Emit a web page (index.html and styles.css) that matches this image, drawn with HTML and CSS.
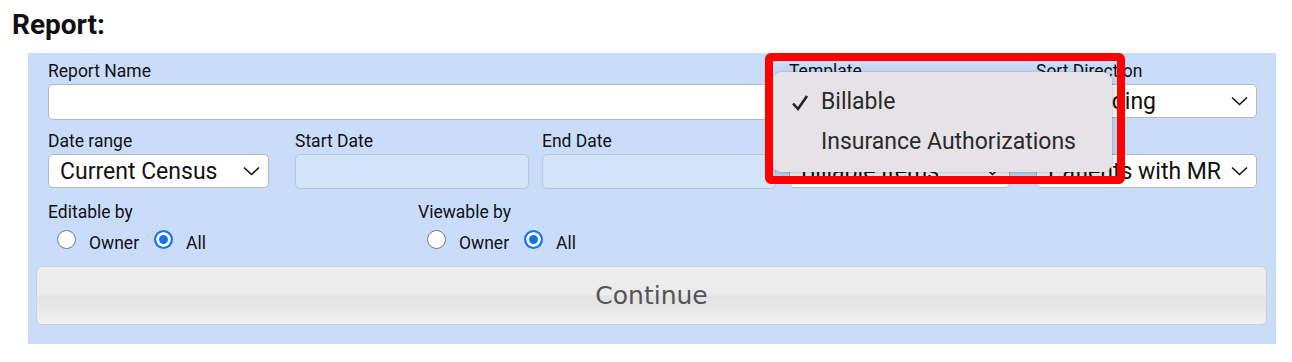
FILE: index.html
```html
<!DOCTYPE html>
<html lang="en">
<head>
    <meta charset="UTF-8">
    <title>Report</title>
    <link rel="stylesheet" href="styles.css">
</head>
<body>
    <div class="page">
        <h1 class="title">Report:</h1>

        <section class="panel">
            <div class="fields">
                <div class="field span-3">
                    <label>Report Name</label>
                    <div class="text-input"></div>
                </div>
                <div class="field">
                    <label>Template</label>
                    <div class="select"><span>Billable</span><svg class="chev" width="17" height="10" viewBox="0 0 17 10"><path d="M1 1.5 L8.5 8.5 L16 1.5" /></svg></div>
                </div>
                <div class="field">
                    <label>Sort Direction</label>
                    <div class="select"><span>Ascending</span><svg class="chev" width="17" height="10" viewBox="0 0 17 10"><path d="M1 1.5 L8.5 8.5 L16 1.5" /></svg></div>
                </div>

                <div class="field">
                    <label>Date range</label>
                    <div class="select"><span>Current Census</span><svg class="chev" width="17" height="10" viewBox="0 0 17 10"><path d="M1 1.5 L8.5 8.5 L16 1.5" /></svg></div>
                </div>
                <div class="field">
                    <label>Start Date</label>
                    <div class="text-input disabled"></div>
                </div>
                <div class="field">
                    <label>End Date</label>
                    <div class="text-input disabled"></div>
                </div>
                <div class="field">
                    <label>Items</label>
                    <div class="select"><span>Billable Items</span><svg class="chev" width="17" height="10" viewBox="0 0 17 10"><path d="M1 1.5 L8.5 8.5 L16 1.5" /></svg></div>
                </div>
                <div class="field">
                    <label>Filter</label>
                    <div class="select"><span>Patients with MR</span><svg class="chev" width="17" height="10" viewBox="0 0 17 10"><path d="M1 1.5 L8.5 8.5 L16 1.5" /></svg></div>
                </div>
            </div>

            <div class="perms">
                <div class="perm-group">
                    <label>Editable by</label>
                    <div class="radios">
                        <span class="radio"></span><span class="radio-text">Owner</span>
                        <span class="radio checked"></span><span class="radio-text">All</span>
                    </div>
                </div>
                <div class="perm-group">
                    <label>Viewable by</label>
                    <div class="radios">
                        <span class="radio"></span><span class="radio-text">Owner</span>
                        <span class="radio checked"></span><span class="radio-text">All</span>
                    </div>
                </div>
            </div>

            <button type="button" class="btn-continue">Continue</button>
        </section>

        <!-- menu aberto do select Template -->
        <div class="menu">
            <div class="menu-item">
                <svg class="check" width="18" height="18" viewBox="0 0 18 18"><path d="M2 9.5 L7 15 L16 2" /></svg>
                Billable
            </div>
            <div class="menu-item">Insurance Authorizations</div>
        </div>
        <div class="highlight"></div>
    </div>
</body>
</html>
```

FILE: styles.css
```css
* {
    margin: 0;
    padding: 0;
    box-sizing: border-box;
}

body {
    font-family: 'Roboto', 'Liberation Sans', sans-serif;
    background-color: #fff;
    color: #111;
}

.page {
    position: relative;
    width: 1292px;
    height: 362px;
}

.title {
    font-size: 28px;
    font-weight: bold;
    line-height: 32px;
    padding: 9px 12px 12px;
}

.panel {
    margin-left: 28px;
    width: 1248px;
    background-color: #c9ddfb;
    padding: 8px 8px 19px;
}

.fields {
    display: grid;
    grid-template-columns: repeat(5, 234px);
    column-gap: 13px;
    row-gap: 11px;
    padding: 0 12px;
}

.span-3 {
    grid-column: span 3;
}

.field label,
.perm-group label {
    display: block;
    font-size: 17.5px;
    line-height: 20px;
    margin-bottom: 3px;
}

.text-input {
    height: 36px;
    width: 100%;
    background-color: #fff;
    border: 1px solid #b5b5b5;
    border-radius: 5px;
}

.fields .field:not(.span-3) .text-input {
    height: 35px;
    width: 234px;
}

.text-input.disabled {
    background-color: #d3e3fa;
    border-color: #b8c6da;
}

.select {
    display: flex;
    align-items: center;
    justify-content: space-between;
    width: 221px;
    height: 34px;
    margin-top: 1px;
    background-color: #fff;
    border: 1px solid #b8b8b8;
    border-radius: 5px;
    padding: 0 8px 0 11px;
    font-size: 23px;
    color: #111;
    overflow: hidden;
    white-space: nowrap;
}

.select span {
    overflow: hidden;
}

.chev {
    flex-shrink: 0;
    margin-left: 6px;
}

.chev path {
    fill: none;
    stroke: #111;
    stroke-width: 1.6;
}

.perms {
    display: flex;
    padding: 13px 12px 0;
}

.perm-group {
    width: 370px;
}

.perm-group label {
    margin-bottom: 7px;
}

.radios {
    display: flex;
    align-items: center;
    padding-left: 9px;
    height: 24px;
}

.radio {
    width: 19px;
    height: 19px;
    border-radius: 50%;
    border: 1px solid #767676;
    background-color: #fff;
    margin-top: -4px;
}

.radio.checked {
    border: 2px solid #1373f0;
    background-color: #1373f0;
    box-shadow: inset 0 0 0 3px #fff;
}

.radio-text {
    font-size: 17.5px;
    margin: 3px 15px 0 13px;
}

.btn-continue {
    display: block;
    width: 1231px;
    height: 59px;
    margin-top: 13px;
    border: 1px solid #cfcfcf;
    border-radius: 6px;
    background: linear-gradient(#ededed 0%, #ebebeb 48%, #e2e2e2 52%, #f1f1f1 100%);
    font-family: 'DejaVu Sans', sans-serif;
    font-size: 25px;
    color: #555;
}

.menu {
    position: absolute;
    left: 772px;
    top: 72px;
    width: 340px;
    height: 100px;
    background-color: #e6e3e8;
    border-radius: 9px;
    box-shadow: 0 3px 12px rgba(0, 0, 0, 0.22), 0 0 0 1px rgba(0, 0, 0, 0.06);
    padding-top: 10px;
}

.menu-item {
    position: relative;
    height: 40px;
    line-height: 40px;
    padding-left: 49px;
    font-size: 23px;
    color: #2a2a2a;
}

.check {
    position: absolute;
    left: 19px;
    top: 12px;
}

.check path {
    fill: none;
    stroke: #222;
    stroke-width: 2.6;
}

.highlight {
    position: absolute;
    left: 765px;
    top: 53px;
    width: 360px;
    height: 131px;
    border: 8px solid #ff0000;
    border-radius: 6px;
}
```
